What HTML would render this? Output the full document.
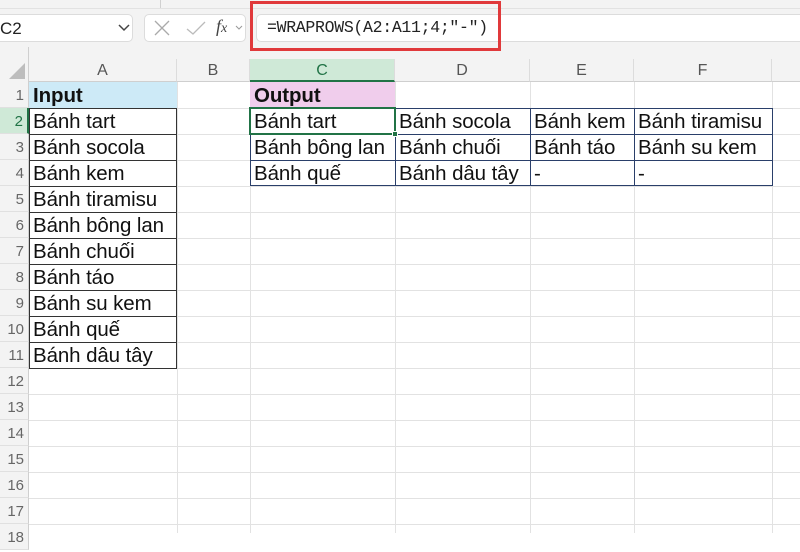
<!DOCTYPE html>
<html><head><meta charset="utf-8"><style>
*{margin:0;padding:0;box-sizing:border-box}
body{width:800px;height:533px;overflow:hidden;background:#fff;font-family:"Liberation Sans","Noto Sans CJK SC",sans-serif;position:relative}
.top{position:absolute;left:0;top:0;width:800px;height:82px;background:#f3f3f3}
.box{position:absolute;background:#fff;border:1px solid #dcdcdc;border-radius:5px}
.hdr{position:absolute;top:59px;height:23px;font-size:16px;color:#555;text-align:center;line-height:24px;border-right:1px solid #dcdcdc;border-bottom:1px solid #cfcfcf}
.rn{position:absolute;left:0;width:29px;height:26px;font-size:15px;color:#666;text-align:right;padding-right:4px;line-height:28px;background:#f3f3f3;border-bottom:1px solid #e0e0e0;border-right:1px solid #cfcfcf}
.vl{position:absolute;top:82px;width:1px;height:451px;background:#e2e2e2}
.hl{position:absolute;left:29px;height:1px;width:771px;background:#e2e2e2}
.c{position:absolute;height:26px;font-size:20.5px;line-height:28px;padding-left:4px;color:#111;white-space:nowrap;letter-spacing:-0.1px}
</style></head><body>
<div class="top"></div>
<div style="position:absolute;left:0;top:8px;width:800px;height:1px;background:#e2e2e2"></div>
<div style="position:absolute;left:160px;top:0;width:1px;height:8px;background:#d0d0d0"></div>
<div class="box" style="left:-6px;top:14px;width:139px;height:28px"></div>
<div style="position:absolute;left:0;top:19px;font-size:17px;color:#222">C2</div>
<svg style="position:absolute;left:118px;top:24px" width="12" height="8"><path d="M1 1L6 6L11 1" stroke="#444" stroke-width="1.5" fill="none"/></svg>
<div class="box" style="left:144px;top:14px;width:102px;height:28px"></div>
<svg style="position:absolute;left:152px;top:19px" width="20" height="18"><path d="M3 2L17 16M17 2L3 16" stroke="#aaa" stroke-width="1.3" fill="none"/></svg>
<svg style="position:absolute;left:185px;top:19px" width="22" height="18"><path d="M2 10L8 15L20 3" stroke="#bbb" stroke-width="1.3" fill="none"/></svg>
<div style="position:absolute;left:216px;top:16px;font-size:18px;font-style:italic;font-family:'Liberation Serif',serif;color:#444">f<span style="font-size:14px">x</span></div>
<svg style="position:absolute;left:235px;top:25px" width="8" height="6"><path d="M1 1L4 4L7 1" stroke="#999" stroke-width="1" fill="none"/></svg>
<div class="box" style="left:256px;top:14px;width:560px;height:28px"></div>
<div style="position:absolute;left:267px;top:18px;font-family:'Liberation Mono',monospace;font-size:16.5px;color:#222;letter-spacing:-0.3px">=WRAPROWS(A2:A11;4;"-")</div>
<div style="position:absolute;left:250px;top:1px;width:251px;height:50px;border:3px solid #e0393b"></div>
<div style="position:absolute;left:28px;top:47px;width:1px;height:35px;background:#cfcfcf"></div>
<svg style="position:absolute;left:8px;top:62px" width="18" height="18"><path d="M17 1L17 17L1 17Z" fill="#bdbdbd"/></svg>
<div class="hdr" style="left:29px;width:148px">A</div>
<div class="hdr" style="left:177px;width:73px">B</div>
<div class="hdr" style="left:250px;width:145px;background:#cfe9d7;color:#217346;border-bottom:2px solid #217346">C</div>
<div class="hdr" style="left:395px;width:135px">D</div>
<div class="hdr" style="left:530px;width:104px">E</div>
<div class="hdr" style="left:634px;width:138px">F</div>
<div class="hdr" style="left:772px;width:40px"></div>
<div class="vl" style="left:177px"></div><div class="vl" style="left:250px"></div><div class="vl" style="left:395px"></div><div class="vl" style="left:530px"></div><div class="vl" style="left:634px"></div><div class="vl" style="left:772px"></div>
<div class="hl" style="top:108px"></div><div class="hl" style="top:134px"></div><div class="hl" style="top:160px"></div><div class="hl" style="top:186px"></div><div class="hl" style="top:212px"></div><div class="hl" style="top:238px"></div><div class="hl" style="top:264px"></div><div class="hl" style="top:290px"></div><div class="hl" style="top:316px"></div><div class="hl" style="top:342px"></div><div class="hl" style="top:368px"></div><div class="hl" style="top:394px"></div><div class="hl" style="top:420px"></div><div class="hl" style="top:446px"></div><div class="hl" style="top:472px"></div><div class="hl" style="top:498px"></div><div class="hl" style="top:524px"></div>
<div class="rn" style="top:82px">1</div>
<div class="rn" style="top:108px;background:#cfe9d7;color:#217346;border-right:2px solid #217346">2</div>
<div class="rn" style="top:134px">3</div><div class="rn" style="top:160px">4</div><div class="rn" style="top:186px">5</div><div class="rn" style="top:212px">6</div><div class="rn" style="top:238px">7</div><div class="rn" style="top:264px">8</div><div class="rn" style="top:290px">9</div><div class="rn" style="top:316px">10</div><div class="rn" style="top:342px">11</div><div class="rn" style="top:368px">12</div><div class="rn" style="top:394px">13</div><div class="rn" style="top:420px">14</div><div class="rn" style="top:446px">15</div><div class="rn" style="top:472px">16</div><div class="rn" style="top:498px">17</div><div class="rn" style="top:524px">18</div>
<div class="c" style="left:29px;top:82px;width:148px;background:#cdeaf7;font-weight:bold">Input</div>
<div style="position:absolute;left:29px;top:108px;width:148px;height:261px;border:1px solid #333"></div>
<div class="c" style="left:29px;top:108px">Bánh tart</div>
<div class="c" style="left:29px;top:134px">Bánh socola</div>
<div class="c" style="left:29px;top:160px">Bánh kem</div>
<div class="c" style="left:29px;top:186px">Bánh tiramisu</div>
<div class="c" style="left:29px;top:212px">Bánh bông lan</div>
<div class="c" style="left:29px;top:238px">Bánh chuối</div>
<div class="c" style="left:29px;top:264px">Bánh táo</div>
<div class="c" style="left:29px;top:290px">Bánh su kem</div>
<div class="c" style="left:29px;top:316px">Bánh quế</div>
<div class="c" style="left:29px;top:342px">Bánh dâu tây</div>
<div style="position:absolute;left:29px;top:134px;width:148px;height:1px;background:#333"></div><div style="position:absolute;left:29px;top:160px;width:148px;height:1px;background:#333"></div><div style="position:absolute;left:29px;top:186px;width:148px;height:1px;background:#333"></div><div style="position:absolute;left:29px;top:212px;width:148px;height:1px;background:#333"></div><div style="position:absolute;left:29px;top:238px;width:148px;height:1px;background:#333"></div><div style="position:absolute;left:29px;top:264px;width:148px;height:1px;background:#333"></div><div style="position:absolute;left:29px;top:290px;width:148px;height:1px;background:#333"></div><div style="position:absolute;left:29px;top:316px;width:148px;height:1px;background:#333"></div><div style="position:absolute;left:29px;top:342px;width:148px;height:1px;background:#333"></div>
<div class="c" style="left:250px;top:82px;width:145px;background:#f0cdec;font-weight:bold">Output</div>
<div style="position:absolute;left:250px;top:108px;width:523px;height:78px;border:1.5px solid #2a3f6a"></div>
<div style="position:absolute;left:250px;top:134px;width:523px;height:1px;background:#2a3f6a"></div>
<div style="position:absolute;left:250px;top:160px;width:523px;height:1px;background:#2a3f6a"></div>
<div style="position:absolute;left:395px;top:108px;width:1px;height:78px;background:#2a3f6a"></div>
<div style="position:absolute;left:530px;top:108px;width:1px;height:78px;background:#2a3f6a"></div>
<div style="position:absolute;left:634px;top:108px;width:1px;height:78px;background:#2a3f6a"></div>
<div style="position:absolute;left:249px;top:107px;width:147px;height:28px;border:2px solid #217346"></div>
<div style="position:absolute;left:392px;top:131px;width:6px;height:6px;background:#217346;border:1px solid #fff"></div>
<div class="c" style="left:250px;top:108px">Bánh tart</div>
<div class="c" style="left:395px;top:108px">Bánh socola</div>
<div class="c" style="left:530px;top:108px">Bánh kem</div>
<div class="c" style="left:634px;top:108px">Bánh tiramisu</div>
<div class="c" style="left:250px;top:134px">Bánh bông lan</div>
<div class="c" style="left:395px;top:134px">Bánh chuối</div>
<div class="c" style="left:530px;top:134px">Bánh táo</div>
<div class="c" style="left:634px;top:134px">Bánh su kem</div>
<div class="c" style="left:250px;top:160px">Bánh quế</div>
<div class="c" style="left:395px;top:160px">Bánh dâu tây</div>
<div class="c" style="left:530px;top:160px">-</div>
<div class="c" style="left:634px;top:160px">-</div>
</body></html>
